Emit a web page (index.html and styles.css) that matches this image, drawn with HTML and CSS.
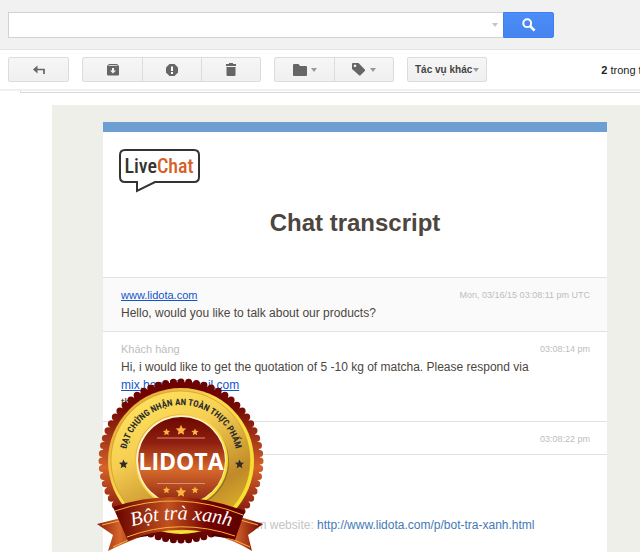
FILE: index.html
```html
<!DOCTYPE html>
<html lang="vi">
<head>
    <meta charset="utf-8">
    <title>Chat transcript</title>
    <link rel="stylesheet" href="styles.css">
</head>
<body>

    <header class="search-header">
        <form class="search-form">
            <div class="search-box">
                <input class="search-input" type="text" name="q" aria-label="Tìm kiếm">
                <button class="search-options" type="button" aria-label="Tùy chọn"><span class="caret"></span></button>
            </div>
            <button class="search-btn" type="button" aria-label="Tìm kiếm">
                <svg width="14" height="14" viewBox="0 0 14 14">
                    <circle cx="5.2" cy="5.2" r="3.9" fill="none" stroke="#fff" stroke-width="2"/>
                    <path d="M8 8l4.6 4.6" stroke="#fff" stroke-width="2.6"/>
                </svg>
            </button>
        </form>
    </header>

    <div class="toolbar">
        <div class="btn-group">
            <button class="tool-btn" type="button" aria-label="Quay lại">
                <svg width="14" height="12" viewBox="0 0 14 12">
                    <path d="M2 5.5h10V10" fill="none" stroke="#666" stroke-width="1.700"/>
                    <path d="M5.500 1.500v8L1 5.5z" fill="#666"/>
                </svg>
            </button>
        </div>
        <div class="btn-group">
            <button class="tool-btn" type="button" aria-label="Lưu trữ">
                <svg width="12" height="12" viewBox="0 0 12 12">
                    <path fill="#666" fill-rule="evenodd" d="M2 0h8l2 2v8.5q0 1-1 1H1q-1 0-1-1V2zM2 1.2L1.2 2h9.6L10 1.2zM5 4v2.6H3l3 3 3-3H7V4z"/>
                </svg>
            </button>
            <button class="tool-btn" type="button" aria-label="Báo spam">
                <svg width="12" height="12" viewBox="0 0 12 12">
                    <path fill="#666" d="M3.5 0h5L12 3.5v5L8.500 12h-5L0 8.500v-5z"/>
                    <path fill="#fff" d="M5 2.500h2v4.500H5zM5 8h2v2H5z"/>
                </svg>
            </button>
            <button class="tool-btn" type="button" aria-label="Xóa">
                <svg width="12" height="13" viewBox="0 0 12 13">
                    <path fill="#666" d="M4 0h4v1h3v2H1V1h3zM1.500 4h9v8q0 1-1 1h-7q-1 0-1-1z"/>
                </svg>
            </button>
        </div>
        <div class="btn-group">
            <button class="tool-btn" type="button" aria-label="Chuyển tới">
                <svg width="14" height="12" viewBox="0 0 14 12">
                    <path fill="#666" d="M1 0h4.500l1.500 2h6q1 0 1 1v8q0 1-1 1H1q-1 0-1-1V1q0-1 1-1z"/>
                </svg>
                <span class="caret"></span>
            </button>
            <button class="tool-btn" type="button" aria-label="Nhãn">
                <svg width="14" height="13" viewBox="0 0 14 13">
                    <path fill="#666" fill-rule="evenodd" d="M1 0h5.500l6.300 6.500q.7.700 0 1.400L8.500 12.300q-.7.700-1.400 0L0 6V1q0-1 1-1zM3 1.500a1.300 1.300 0 1 0 .01 0z"/>
                </svg>
                <span class="caret"></span>
            </button>
        </div>
        <button class="more-btn" type="button">Tác vụ khác<span class="caret"></span></button>
        <span class="counter"><b>2</b> trong tổng số</span>
    </div>

    <main>
        <div class="thread-edge"></div>

        <div class="mail-body">
            <div class="card">
                <div class="card-head">
                    <svg class="livechat-logo" width="82" height="46" viewBox="0 0 82 46" role="img" aria-label="LiveChat">
                        <path d="M6 2h69q5 0 5 5v22q0 5-5 5H36L18 43v-9H6q-5 0-5-5V7q0-5 5-5z" fill="#fff" stroke="#333" stroke-width="2"/>
                        <text class="logo-text" x="40" y="25" text-anchor="middle" fill="#333">Live<tspan fill="#d4602a">Chat</tspan></text>
                    </svg>
                    <h1>Chat transcript</h1>
                </div>

                <div class="message message-agent">
                    <div class="message-meta">
                        <a class="message-author" href="http://www.lidota.com">www.lidota.com</a>
                        <span class="message-time">Mon, 03/16/15 03:08:11 pm UTC</span>
                    </div>
                    <p>Hello, would you like to talk about our products?</p>
                </div>

                <div class="message">
                    <div class="message-meta">
                        <span class="message-author">Khách hàng</span>
                        <span class="message-time">03:08:14 pm</span>
                    </div>
                    <p>Hi, i would like to get the quotation of 5 -10 kg of matcha. Please respond via<br>
                    <a href="mailto:mix.hanoi@gmail.com">mix.hanoi@gmail.com</a><br>
                    thanks</p>
                </div>

                <div class="message">
                    <div class="message-meta">
                        <span class="message-author"></span>
                        <span class="message-time">03:08:22 pm</span>
                    </div>
                </div>

                <div class="card-foot">
                    Customer started chat from website: <a href="http://www.lidota.com/p/bot-tra-xanh.html">http://www.lidota.com/p/bot-tra-xanh.html</a>
                </div>

                <!-- quality seal, floats over the transcript -->
                <svg class="seal" width="180" height="182" viewBox="0 0 180 182" role="img" aria-label="LIDOTA Bột trà xanh">
                    <defs>
                        <linearGradient id="rim" gradientUnits="userSpaceOnUse" x1="0" y1="9" x2="0" y2="173">
                            <stop offset="0" stop-color="#6b0000"/>
                            <stop offset=".18" stop-color="#740a04"/>
                            <stop offset=".54" stop-color="#d4622a"/>
                            <stop offset=".82" stop-color="#861a0c"/>
                            <stop offset="1" stop-color="#5c0000"/>
                        </linearGradient>
                        <linearGradient id="gold" x1=".2" y1="0" x2=".75" y2="1">
                            <stop offset="0" stop-color="#ffe35e"/>
                            <stop offset=".35" stop-color="#f6cf52"/>
                            <stop offset=".75" stop-color="#c08a28"/>
                            <stop offset="1" stop-color="#e0b52c"/>
                        </linearGradient>
                        <linearGradient id="goldEdge" x1="0" y1="0" x2="1" y2="1">
                            <stop offset="0" stop-color="#d9952b"/>
                            <stop offset=".4" stop-color="#fbd94f"/>
                            <stop offset="1" stop-color="#f2e422"/>
                        </linearGradient>
                        <linearGradient id="core" x1="0" y1="0" x2="0" y2="1">
                            <stop offset="0" stop-color="#6d0800"/>
                            <stop offset=".3" stop-color="#8f2010"/>
                            <stop offset=".6" stop-color="#d66a2c"/>
                            <stop offset="1" stop-color="#8c2410"/>
                        </linearGradient>
                        <linearGradient id="band" x1="0" y1="0" x2="1" y2="0">
                            <stop offset="0" stop-color="#640000"/>
                            <stop offset=".42" stop-color="#c2511f"/>
                            <stop offset=".72" stop-color="#740200"/>
                            <stop offset="1" stop-color="#5c0000"/>
                        </linearGradient>
                        <linearGradient id="tail" x1="0" y1="0" x2="1" y2="0">
                            <stop offset="0" stop-color="#8a1d0c"/>
                            <stop offset=".45" stop-color="#d6652a"/>
                            <stop offset="1" stop-color="#6a0000"/>
                        </linearGradient>
                        <path id="star" d="M0-4.500l1.300 3 3.200.3-2.400 2.200.7 3.200L0 2.500l-2.800 1.700.7-3.200-2.400-2.200 3.200-.3z"/>
                        <path id="arc" d="M35 91A56 56 0 0 1 147 91"/>
                        <path id="wave" d="M40 157Q88 142 143 157"/>
                    </defs>

                    <circle cx="91" cy="91" r="79" fill="url(#rim)"/>
                    <circle cx="91" cy="91" r="79" fill="none" stroke="url(#rim)" stroke-width="7" stroke-linecap="round" pathLength="64" stroke-dasharray="0 1"/>
                    <circle cx="91" cy="91" r="73" fill="url(#goldEdge)"/>
                    <circle cx="90.500" cy="90.500" r="69.500" fill="url(#gold)" stroke="#c98a25" stroke-width=".6"/>
                    <circle cx="93" cy="92" r="46" fill="#6f5527" opacity=".55"/>
                    <circle cx="91.500" cy="90.500" r="46.500" fill="url(#goldEdge)"/>
                    <circle cx="91" cy="90" r="44.800" fill="#fff4c8"/>
                    <circle cx="91.500" cy="90.500" r="43.500" fill="url(#core)"/>

                    <text class="seal-arc" text-anchor="middle"><textPath href="#arc" startOffset="50%">ĐẠT CHỨNG NHẬN AN TOÀN THỰC PHẨM</textPath></text>
                    <use href="#star" x="33.500" y="94" fill="#2b2b2b"/>
                    <use href="#star" x="149.500" y="94" fill="#2b2b2b"/>

                    <g fill="#fdb440">
                        <use href="#star" transform="translate(76.500 62) scale(.8)"/>
                        <use href="#star" transform="translate(91 60) scale(1.150)"/>
                        <use href="#star" transform="translate(105 62) scale(.8)"/>
                        <use href="#star" transform="translate(76.500 120) scale(.8)"/>
                        <use href="#star" transform="translate(91 122) scale(1.150)"/>
                        <use href="#star" transform="translate(105 120) scale(.8)"/>
                    </g>
                    <path d="M67 68h48M67 113.500h48" stroke="#d98d74" stroke-width="1"/>
                    <text class="seal-name" x="91" y="100" text-anchor="middle">LIDOTA</text>

                    <path d="M7 154L35 147 58 164Q36 172 18 181L23 165z" fill="url(#tail)"/>
                    <path d="M173 154L150 147 122 164Q144 170 162 181L158 165z" fill="url(#tail)"/>
                    <path d="M12 155L33 150M23 177Q38 169 54 165M168 155L150 150M160 177Q143 168 126 165" fill="none" stroke="#f9b13a" stroke-width="1"/>
                    <path d="M38 169L58 160 58 166z" fill="#4a0000"/>
                    <path d="M144 169L122 160 122 166z" fill="#4a0000"/>
                    <path d="M23 137Q88 115 155 141L145 170Q90 149 38 171z" fill="url(#band)"/>
                    <path d="M25 141Q88 119 153 145M37 167Q90 147 145 166" fill="none" stroke="#f9b13a" stroke-width="1"/>
                    <text class="seal-script" text-anchor="middle"><textPath href="#wave" startOffset="50%">Bột trà xanh</textPath></text>
                </svg>
            </div>
        </div>
    </main>

</body>
</html>
```
FILE: styles.css
```css
* {
    box-sizing: border-box;
}

body {
    margin: 0;
    font-family: "Liberation Sans", Arial, sans-serif;
    background-color: #fff;
    color: #4c463e;
    overflow: hidden;
}

button {
    font-family: inherit;
    cursor: pointer;
}

.search-header {
    background-color: #f1f1f1;
    border-bottom: 1px solid #e5e5e5;
    padding: 12px 8px 11px;
}

.search-form {
    display: flex;
    max-width: 546px;
    height: 26px;
}

.search-box {
    flex: 1;
    display: flex;
    align-items: stretch;
    background-color: #fff;
    border: 1px solid #d2d2d2;
    border-right: none;
}

.search-input {
    flex: 1;
    min-width: 0;
    border: none;
    outline: none;
    padding: 0 8px;
    font-size: 14px;
    background: none;
}

.search-options {
    display: flex;
    align-items: center;
    border: none;
    background: none;
    padding: 0 5px;
}

.caret {
    border-left: 3px solid transparent;
    border-right: 3px solid transparent;
    border-top: 4px solid #999;
}

.search-options .caret {
    border-top-color: #c4c4c4;
}

.search-btn {
    width: 51px;
    display: flex;
    align-items: center;
    justify-content: center;
    padding: 0;
    border: 1px solid #3f7fee;
    border-radius: 0 2px 2px 0;
    background: linear-gradient(#4b8df8, #4684ef);
}

.toolbar {
    display: flex;
    align-items: center;
    gap: 13px;
    padding: 7px 8px;
    border-bottom: 2px solid #f0f0f0;
    overflow: hidden;
}

.btn-group {
    display: flex;
    flex: none;
    border: 1px solid #dcdcdc;
    border-radius: 2px;
    background: linear-gradient(#f6f6f6, #f0f0f0);
}

.tool-btn {
    display: flex;
    align-items: center;
    justify-content: center;
    gap: 4px;
    width: 59px;
    height: 23px;
    padding: 0;
    border: none;
    background: none;
}

.tool-btn + .tool-btn {
    border-left: 1px solid #dcdcdc;
}

.more-btn {
    display: flex;
    flex: none;
    align-items: center;
    gap: 1px;
    height: 25px;
    padding: 0 7px;
    border: 1px solid #dcdcdc;
    border-radius: 2px;
    background: linear-gradient(#f6f6f6, #f0f0f0);
    color: #444;
    font-size: 10px;
    font-weight: bold;
}

.counter {
    margin-left: 101px;
    color: #222;
    font-size: 11px;
    white-space: nowrap;
}

.thread-edge {
    height: 2px;
    margin-left: 20px;
    border-left: 1px solid #d8d8d8;
    border-bottom: 1px solid #d8d8d8;
}

.mail-body {
    margin: 12px 0 0 52px;
    padding: 17px 33px 0 51px;
    min-height: calc(100vh - 105px);
    background-color: #efefe9;
}

.card {
    position: relative;
    min-height: calc(100vh - 122px);
    border-top: 10px solid #6d9fd3;
    background-color: #fff;
}

.card-head {
    padding: 16px 16px 40px;
}

.livechat-logo {
    display: block;
}

.logo-text {
    font-family: "Roboto Condensed", "Liberation Sans Narrow", "Open Sans", sans-serif;
    font-size: 20px;
    font-weight: 500;
}

h1 {
    margin: 15px 0 0;
    font-size: 24px;
    line-height: 28px;
    text-align: center;
}

.message {
    padding: 8px 17px 6px 18px;
    border-top: 1px solid #e2e2e2;
}

.message-agent {
    background-color: #fafafa;
}

.message-meta {
    display: flex;
    justify-content: space-between;
    height: 18px;
    line-height: 18px;
    color: #bdbdbd;
}

.message-author {
    font-size: 11px;
}

.message-time {
    font-size: 9px;
}

.message p {
    margin: 0;
    padding-bottom: 3px;
    font-size: 12px;
    line-height: 18px;
}

.message a {
    color: #1155cc;
}

.card-foot {
    padding: 61px 18px 18px;
    border-top: 1px solid #e2e2e2;
    color: #c4c4c4;
    font-size: 12px;
    line-height: 18px;
}

.card-foot a {
    color: #4379b8;
    text-decoration: none;
}

.seal {
    position: absolute;
    left: -13px;
    top: 238px;
}

.seal-arc {
    font-family: "Roboto Condensed", "Liberation Sans Narrow", "Open Sans", sans-serif;
    font-size: 9px;
    font-weight: bold;
    fill: #2b2b2b;
}

.seal-name {
    font-family: "Open Sans", "Noto Sans", sans-serif;
    font-size: 23px;
    font-weight: 700;
    fill: #fff;
}

.seal-script {
    font-family: "Liberation Serif", "Times New Roman", serif;
    font-size: 20px;
    font-style: italic;
    fill: #fff;
}
```
